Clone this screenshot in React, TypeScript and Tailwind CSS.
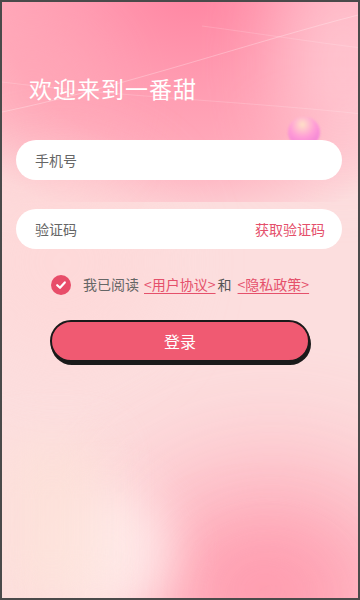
const FONT = "font-['Noto_Sans_CJK_SC','Noto_Sans',sans-serif]"

export default function App() {
  return (
    <div
      className={`relative h-[600px] w-[360px] overflow-hidden border-2 border-[#4a4a4a] bg-[#fcdede] ${FONT}`}
    >
      {/* background blobs */}
      <div className="pointer-events-none absolute inset-0">
        <div className="absolute -left-16 -top-20 h-[280px] w-[440px] bg-[radial-gradient(ellipse_at_58%_22%,#ff84a1_0%,#ff9ab0_30%,#ffa9ba_55%,rgba(255,190,200,0)_82%)]" />
        <div className="absolute -left-10 top-[20px] h-[140px] w-[140px] rounded-full bg-[#ffa6b6] opacity-70 blur-2xl" />
        <div className="absolute -right-10 -top-10 h-[200px] w-[110px] rounded-full bg-[#ffd0d8] opacity-80 blur-2xl" />
        <div className="absolute left-[-40px] top-[160px] h-[200px] w-[200px] rounded-full bg-[#ffd6d6] opacity-60 blur-2xl" />
        <div className="absolute -right-16 bottom-[-130px] h-[260px] w-[300px] rounded-full bg-[#ffa0b2] opacity-90 blur-3xl" />
        <div className="absolute right-[30px] bottom-[-30px] h-[80px] w-[130px] rounded-full bg-[#ff92a8] opacity-70 blur-2xl" />
        <div className="absolute left-[40px] bottom-[-20px] h-[130px] w-[130px] rounded-full bg-[#fff0ee] opacity-80 blur-xl" />
        <div className="absolute left-0 top-[440px] h-[160px] w-[100px] bg-[#fde2d8] opacity-70 blur-xl" />
        <svg className="absolute inset-0" width="360" height="600" viewBox="0 0 360 600">
          <path d="M0 110 C 120 85, 250 40, 360 12" stroke="#ffffff" strokeOpacity="0.35" strokeWidth="0.8" fill="none" />
          <path d="M0 80 C 120 95, 250 100, 360 112" stroke="#ffffff" strokeOpacity="0.22" strokeWidth="0.8" fill="none" />
          <path d="M200 24 C 260 32, 310 40, 360 46" stroke="#ffffff" strokeOpacity="0.2" strokeWidth="0.8" fill="none" />
        </svg>
        <div className="absolute left-[286px] top-[115px] h-[30px] w-[32px] rounded-full bg-[radial-gradient(circle_at_45%_25%,#ffe7c8_0%,#ff9ad8_45%,#f07ad8_80%)] opacity-90 blur-[1px]" />
      </div>

      <div className="relative flex flex-col px-[14px] pt-[70px]">
        <h1 className="pl-[13px] text-[23px] leading-[32px] tracking-[1px] text-white">欢迎来到一番甜</h1>

        <div className="mt-[36px] flex h-[40px] w-[326px] items-center rounded-full bg-white px-[19px]">
          <span className="text-[14px] text-[#666]">手机号</span>
        </div>

        <div className="mt-[29px] flex h-[40px] w-[326px] items-center justify-between rounded-full bg-white px-[19px]">
          <span className="text-[14px] text-[#666]">验证码</span>
          <span className="mr-[-2px] text-[14px] text-[#e5506b]">获取验证码</span>
        </div>

        <div className="mt-[25px] flex items-center pl-[35px] text-[14px]">
          <span className="flex h-[20px] w-[20px] items-center justify-center rounded-full bg-[#e84d69]">
            <svg width="12" height="12" viewBox="0 0 12 12">
              <path d="M2.2 6.2 L5 8.8 L9.8 3.4" stroke="#fff" strokeWidth="2.2" fill="none" strokeLinecap="round" strokeLinejoin="round" />
            </svg>
          </span>
          <span className="ml-[12px] text-[#666]">我已阅读</span>
          <span className="ml-[5px] text-[#e5506b] underline underline-offset-[3px]">&lt;用户协议&gt;</span>
          <span className="ml-[2px] text-[#555]">和</span>
          <span className="ml-[6px] text-[#e5506b] underline underline-offset-[3px]">&lt;隐私政策&gt;</span>
        </div>

        <div className="mt-[25px] flex pl-[34px]">
          <button className="flex h-[42px] w-[260px] items-center justify-center rounded-full border-2 border-[#1a1a1a] bg-[#f05a72] text-[16px] text-white shadow-[1px_3px_0_#1a1a1a]">
            登录
          </button>
        </div>
      </div>
    </div>
  )
}
